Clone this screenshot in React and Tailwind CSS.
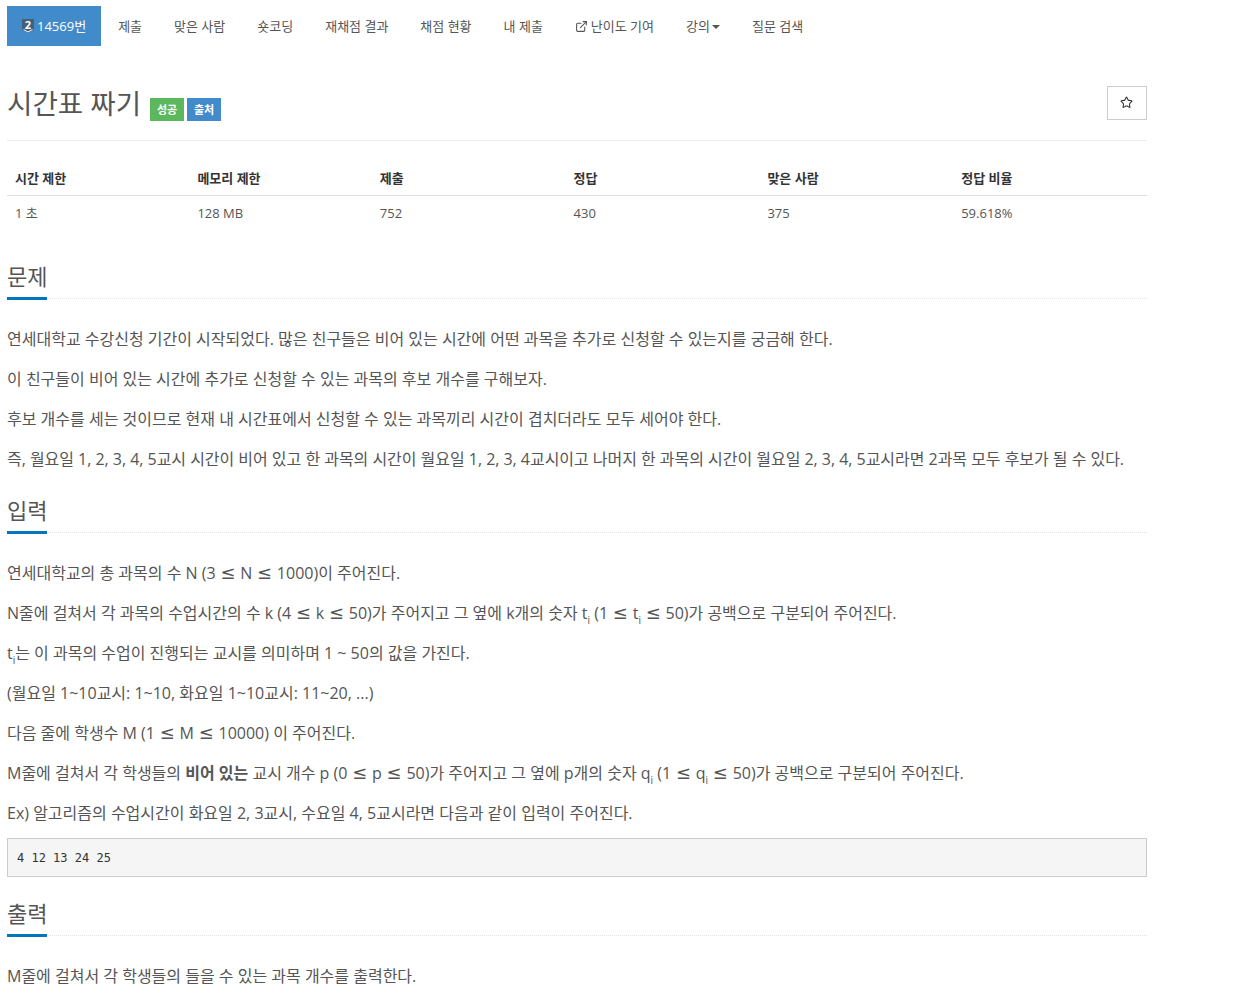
import React from 'react';
import { ExternalLink, Star } from 'lucide-react';

const stats = [
  { label: '시간 제한', value: '1 초', width: 'w-[16%]' },
  { label: '메모리 제한', value: '128 MB', width: 'w-[16%]' },
  { label: '제출', value: '752', width: 'w-[17%]' },
  { label: '정답', value: '430', width: 'w-[17%]' },
  { label: '맞은 사람', value: '375', width: 'w-[17%]' },
  { label: '정답 비율', value: '59.618%', width: 'w-[17%]' },
];

const Sub = ({ children }) => <sub className="text-[10px] leading-[0] align-[-2px]">{children}</sub>;

const Le = () => <span className="mx-[4.75px] text-[18px] leading-[0] font-['DejaVu_Sans',sans-serif]">≤</span>;

const NavLink = ({ children }) => (
  <a className="flex items-center px-4 pt-px h-10 text-[13px] text-[#555]">{children}</a>
);

const Section = ({ title, children }) => (
  <section className="pb-[7px]">
    <div className="flex h-[39px] mb-[28px] border-b border-dotted border-[#e5e5e5]">
      <h2 className="h-[40px] w-10 shrink-0 text-[22px] leading-[32px] text-[#555] border-b-[3px] border-[#0076c0] whitespace-nowrap">
        {title}
      </h2>
    </div>
    {children}
  </section>
);

const P = ({ children }) => <p className="text-[16px] leading-[24px] mb-4 text-[#555] whitespace-nowrap">{children}</p>;

export default function App() {
  return (
    <div className="w-[1241px] h-[996px] overflow-hidden bg-white pl-[7px] pt-[6px] font-['Open_Sans','Noto_Sans_CJK_KR',sans-serif]">
      <div className="w-[1140px]">
        <nav className="flex">
          <a className="flex items-center bg-[#428bca] text-white text-[13px] pt-px h-10 pl-[15px] pr-[15px] mr-px">
            <svg width="12" height="15" viewBox="0 0 12 15" className="mr-[3px] overflow-visible">
              <path d="M0 0h12v10.500l-6 3.500-6-3.500z" fill="#435f7a" />
              <path d="M1.500 10.500l4.500 2.500 4.500-2.500" fill="none" stroke="#fff" strokeWidth="1" />
              <text x="6" y="9.500" fontSize="11" fontWeight="700" textAnchor="middle" fill="#fff">2</text>
            </svg>
            14569번
          </a>
          <NavLink>제출</NavLink>
          <NavLink>맞은 사람</NavLink>
          <NavLink>숏코딩</NavLink>
          <NavLink>재채점 결과</NavLink>
          <NavLink>채점 현황</NavLink>
          <NavLink>내 제출</NavLink>
          <NavLink>
            <ExternalLink size={13} className="mr-[3px]" />
            난이도 기여
          </NavLink>
          <NavLink>
            강의
            <span className="ml-[2px] w-0 h-0 border-x-4 border-x-transparent border-t-4 border-t-[#555]" />
          </NavLink>
          <NavLink>질문 검색</NavLink>
        </nav>

        <div className="mt-[34px] pt-[6px] h-[61px] border-b border-[#eee] flex items-start justify-between">
          <div className="flex items-start">
            <h1 className="w-[135px] text-[27.6px] leading-[34px] text-[#555] whitespace-nowrap">시간표 짜기</h1>
            <span className="mt-[12px] ml-[8px] pt-px bg-[#5cb85c] text-white text-[11px] font-bold h-[23px] w-[34px] flex items-center justify-center">성공</span>
            <span className="mt-[12px] ml-[3px] pt-px bg-[#428bca] text-white text-[11px] font-bold h-[23px] w-[34px] flex items-center justify-center">출처</span>
          </div>
          <button className="w-10 h-[34px] border border-[#ccc] flex items-center justify-center text-[#333]">
            <Star size={13} className="mr-[2px] mb-[2px]" />
          </button>
        </div>

        <table className="w-full mt-[20px] mb-[29px] text-[13px] text-[#555] table-fixed">
          <thead>
            <tr className="border-b border-[#ddd]">
              {stats.map((s) => (
                <th key={s.label} className={`${s.width} text-left px-2 pt-px h-[34px] font-bold text-[#333]`}>{s.label}</th>
              ))}
            </tr>
          </thead>
          <tbody>
            <tr>
              {stats.map((s) => (
                <td key={s.label} className="px-2 h-[36px]">{s.value}</td>
              ))}
            </tr>
          </tbody>
        </table>

        <Section title="문제">
          <P>연세대학교 수강신청 기간이 시작되었다. 많은 친구들은 비어 있는 시간에 어떤 과목을 추가로 신청할 수 있는지를 궁금해 한다.</P>
          <P>이 친구들이 비어 있는 시간에 추가로 신청할 수 있는 과목의 후보 개수를 구해보자.</P>
          <P>후보 개수를 세는 것이므로 현재 내 시간표에서 신청할 수 있는 과목끼리 시간이 겹치더라도 모두 세어야 한다.</P>
          <P><span className="tracking-[-0.03px]">즉, 월요일 1, 2, 3, 4, 5교시 시간이 비어 있고 한 과목의 시간이 월요일 1, 2, 3, 4교시이고 나머지 한 과목의 시간이 월요일 2, 3, 4, 5교시라면 2과목 모두 후보가 될 수 있다.</span></P>
        </Section>

        <Section title="입력">
          <P>연세대학교의 총 과목의 수 N (3<Le />N<Le />1000)이 주어진다.</P>
          <P>N줄에 걸쳐서 각 과목의 수업시간의 수 k (4<Le />k<Le />50)가 주어지고 그 옆에 k개의 숫자 t<Sub>i</Sub> (1<Le />t<Sub>i</Sub><Le />50)가 공백으로 구분되어 주어진다.</P>
          <P>t<Sub>i</Sub>는 이 과목의 수업이 진행되는 교시를 의미하며 1 ~ 50의 값을 가진다.</P>
          <P>(월요일 1~10교시: 1~10, 화요일 1~10교시: 11~20, ...)</P>
          <P>다음 줄에 학생수 M (1<Le />M<Le />10000) 이 주어진다.</P>
          <P>M줄에 걸쳐서 각 학생들의 <strong className="font-bold">비어 있는</strong> 교시 개수 p (0<Le />p<Le />50)가 주어지고 그 옆에 p개의 숫자 q<Sub>i</Sub> (1<Le />q<Sub>i</Sub><Le />50)가 공백으로 구분되어 주어진다.</P>
          <P>Ex) 알고리즘의 수업시간이 화요일 2, 3교시, 수요일 4, 5교시라면 다음과 같이 입력이 주어진다.</P>
          <pre className="h-[39px] -mt-[3px] mb-[13px] bg-[#f5f5f5] border border-[#ccc] px-[9px] text-[12px] leading-[38px] text-[#333] font-['DejaVu_Sans_Mono',monospace]">4 12 13 24 25</pre>
        </Section>

        <Section title="출력">
          <P>M줄에 걸쳐서 각 학생들의 들을 수 있는 과목 개수를 출력한다.</P>
        </Section>
      </div>
    </div>
  );
}
